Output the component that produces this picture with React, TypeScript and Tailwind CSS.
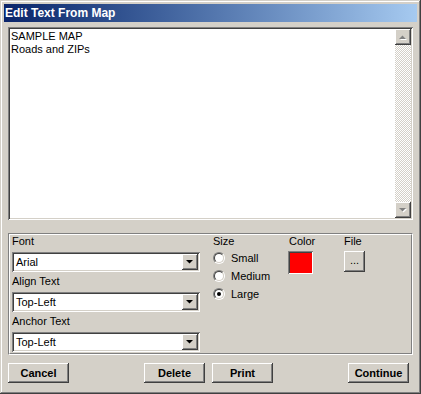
import React from "react";

// classic win2k bevels
const raised =
  "bg-[#d4d0c8] shadow-[inset_-1px_-1px_#404040,inset_1px_1px_#ffffff,inset_-2px_-2px_#808080,inset_2px_2px_#d4d0c8]";
const sunken =
  "shadow-[inset_1px_1px_#808080,inset_-1px_-1px_#ffffff,inset_2px_2px_#404040,inset_-2px_-2px_#d4d0c8]";

const Arrow = ({ dir, disabled }: { dir: "up" | "down"; disabled?: boolean }) => {
  const pts = dir === "up" ? "0,4 7,4 3.5,0.5" : "0,0 7,0 3.5,3.5";
  return (
    <svg width="8" height="5" viewBox="0 0 8 5" className="block">
      {disabled && <polygon points={pts} fill="#ffffff" transform="translate(1,1)" />}
      <polygon points={pts} fill={disabled ? "#808080" : "#000000"} />
    </svg>
  );
};

const Combo = ({ value }: { value: string }) => (
  <div className={`h-[20px] w-[188px] bg-white p-[2px] flex ${sunken}`}>
    <div className="flex-1 pl-[2px] leading-[16px] text-[11px] text-black">{value}</div>
    <div className={`w-[16px] h-[16px] flex items-center justify-center ${raised}`}>
      <Arrow dir="down" />
    </div>
  </div>
);

const Radio = ({ label, checked }: { label: string; checked?: boolean }) => (
  <div className="h-[18px] flex items-center">
    <span className="w-[12px] h-[12px] rounded-full border border-t-[#808080] border-l-[#808080] border-r-white border-b-white flex">
      <span className="flex-1 rounded-full bg-white border border-t-[#404040] border-l-[#404040] border-r-[#d4d0c8] border-b-[#d4d0c8] flex items-center justify-center">
        {checked && <span className="w-[4px] h-[4px] rounded-full bg-black" />}
      </span>
    </span>
    <span className="ml-[6px] text-[11px] leading-[13px]">{label}</span>
  </div>
);

const Button = ({ label, className = "" }: { label: string; className?: string }) => (
  <button
    className={`w-[61px] h-[20px] text-[11px] font-bold leading-[16px] text-black ${raised} ${className}`}
  >
    {label}
  </button>
);

export default function App() {
  return (
    <div
      className="w-[421px] h-[394px] bg-[#d4d0c8] p-[4px] shadow-[inset_-1px_-1px_#404040,inset_1px_1px_#d4d0c8,inset_-2px_-2px_#808080,inset_2px_2px_#ffffff] text-black"
      style={{ fontFamily: '"Liberation Sans", Arial, sans-serif' }}
    >
      {/* title bar */}
      <div className="h-[18px] bg-gradient-to-r from-[#0a246a] to-[#a6caf0] pl-[1px] text-[12px] font-bold leading-[18px] text-white">
        Edit Text From Map
      </div>

      <div className="px-[4px]">
        {/* text area */}
        <div className={`mt-[5px] h-[193px] bg-white p-[2px] flex ${sunken}`}>
          <div className="flex-1 pl-[1px] pt-[1px] text-[11px] leading-[13px]">
            <div>SAMPLE MAP</div>
            <div>Roads and ZIPs</div>
          </div>
          <div className="w-[16px] flex flex-col bg-[image:repeating-conic-gradient(#d4d0c8_0_25%,#ffffff_0_50%)] bg-[length:2px_2px]">
            <div className={`h-[16px] flex items-center justify-center ${raised}`}>
              <Arrow dir="up" disabled />
            </div>
            <div className="flex-1" />
            <div className={`h-[16px] flex items-center justify-center ${raised}`}>
              <Arrow dir="down" disabled />
            </div>
          </div>
        </div>

        {/* options group */}
        <div className="mt-[13px] h-[122px] border border-t-[#808080] border-l-[#808080] border-r-white border-b-white">
          <div className="h-full border border-t-white border-l-white border-r-[#808080] border-b-[#808080] pl-[2px] flex text-[11px] leading-[13px]">
            <div className="w-[188px]">
              <div className="h-[17px]">Font</div>
              <Combo value="Arial" />
              <div className="h-[20px] pt-[3px]">Align Text</div>
              <Combo value="Top-Left" />
              <div className="h-[20px] pt-[3px]">Anchor Text</div>
              <Combo value="Top-Left" />
            </div>

            <div className="ml-[13px] w-[75px]">
              <div className="h-[14px]">Size</div>
              <Radio label="Small" />
              <Radio label="Medium" />
              <Radio label="Large" checked />
            </div>

            <div className="w-[56px]">
              <div className="h-[16px] pl-[1px]">Color</div>
              <div className="w-[25px] h-[23px] bg-[#ff0000] shadow-[inset_1px_1px_#808080,inset_-1px_-1px_#ffffff,inset_2px_2px_#404040]" />
            </div>

            <div>
              <div className="h-[16px]">File</div>
              <button className={`w-[21px] h-[21px] text-[11px] leading-[12px] pb-[4px] ${raised}`}>...</button>
            </div>
          </div>
        </div>

        {/* buttons */}
        <div className="mt-[8px] flex">
          <Button label="Cancel" />
          <Button label="Delete" className="ml-[75px]" />
          <Button label="Print" className="ml-[7px]" />
          <Button label="Continue" className="ml-[75px]" />
        </div>
      </div>
    </div>
  );
}
